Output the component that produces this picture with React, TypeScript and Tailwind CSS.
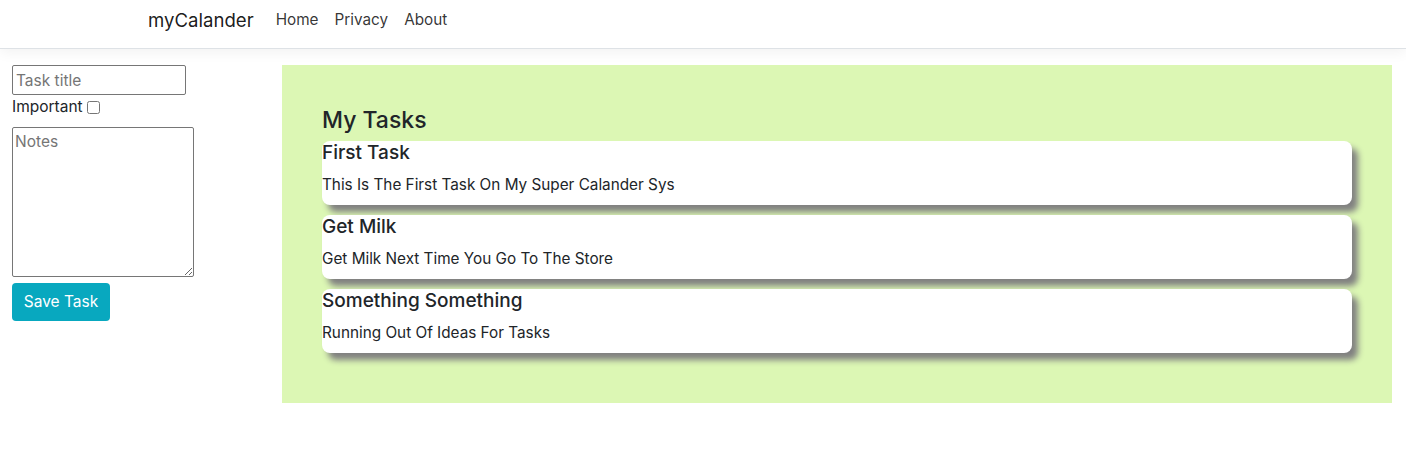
const tasks = [
  { title: "First Task", notes: "This Is The First Task On My Super Calander Sys" },
  { title: "Get Milk", notes: "Get Milk Next Time You Go To The Store" },
  { title: "Something Something", notes: "Running Out Of Ideas For Tasks" },
];

export default function App() {
  return (
    <div className="min-h-[454px] bg-white text-[#212529] font-['Inter','Liberation_Sans',sans-serif]">
      {/* navbar */}
      <nav className="h-[49px] border-b border-[#dee2e6] bg-white shadow-[0_4px_12px_rgba(0,0,0,0.05)]">
        <div className="mx-auto flex h-full w-[1140px] items-center px-[15px] pb-[8px]">
          <span className="mr-[14px] text-[18.6px] leading-[30px] text-black/90">myCalander</span>
          <a className="px-2 text-[15.3px] text-black/80">Home</a>
          <a className="px-2 text-[15.3px] text-black/80">Privacy</a>
          <a className="px-2 text-[15.3px] text-black/80">About</a>
        </div>
      </nav>

      <main className="mt-4 flex pl-3 pr-[14px]">
        {/* new task form */}
        <div className="flex w-[270px] shrink-0 flex-col items-start">
          <input
            placeholder="Task title"
            className="h-[30px] w-[174px] rounded-[2px] border border-[#767676] px-[3px] text-[15.5px] placeholder:text-[#757575]"
          />
          <label className="mt-[1px] flex items-center gap-1 text-[15.5px] leading-[22px]">
            Important
            <input type="checkbox" className="h-[13px] w-[13px]" />
          </label>
          <textarea
            placeholder="Notes"
            className="mt-[9px] h-[150px] w-[182px] rounded-[2px] border border-[#767676] px-[2px] py-[2px] text-[15.5px] placeholder:text-[#757575]"
          />
          <button className="mt-[6px] h-[38px] w-[98px] rounded-[4px] bg-[#08a8bf] text-[15.5px] text-white">
            Save Task
          </button>
        </div>

        {/* task list */}
        <section className="flex-1 bg-[#dcf7b4] px-10 pt-[41px] pb-[40px]">
          <h3 className="mb-[6px] text-[23px] font-medium leading-[29px]">My Tasks</h3>
          {tasks.map((t) => (
            <div
              key={t.title}
              className="mb-[10px] rounded-[8px] bg-white pb-2 shadow-[6px_7px_6px_#808080]"
            >
              <h5 className="mb-2 text-[19px] font-medium leading-[24px]">{t.title}</h5>
              <p className="text-[15.3px] leading-[24px]">{t.notes}</p>
            </div>
          ))}
        </section>
      </main>
    </div>
  );
}
